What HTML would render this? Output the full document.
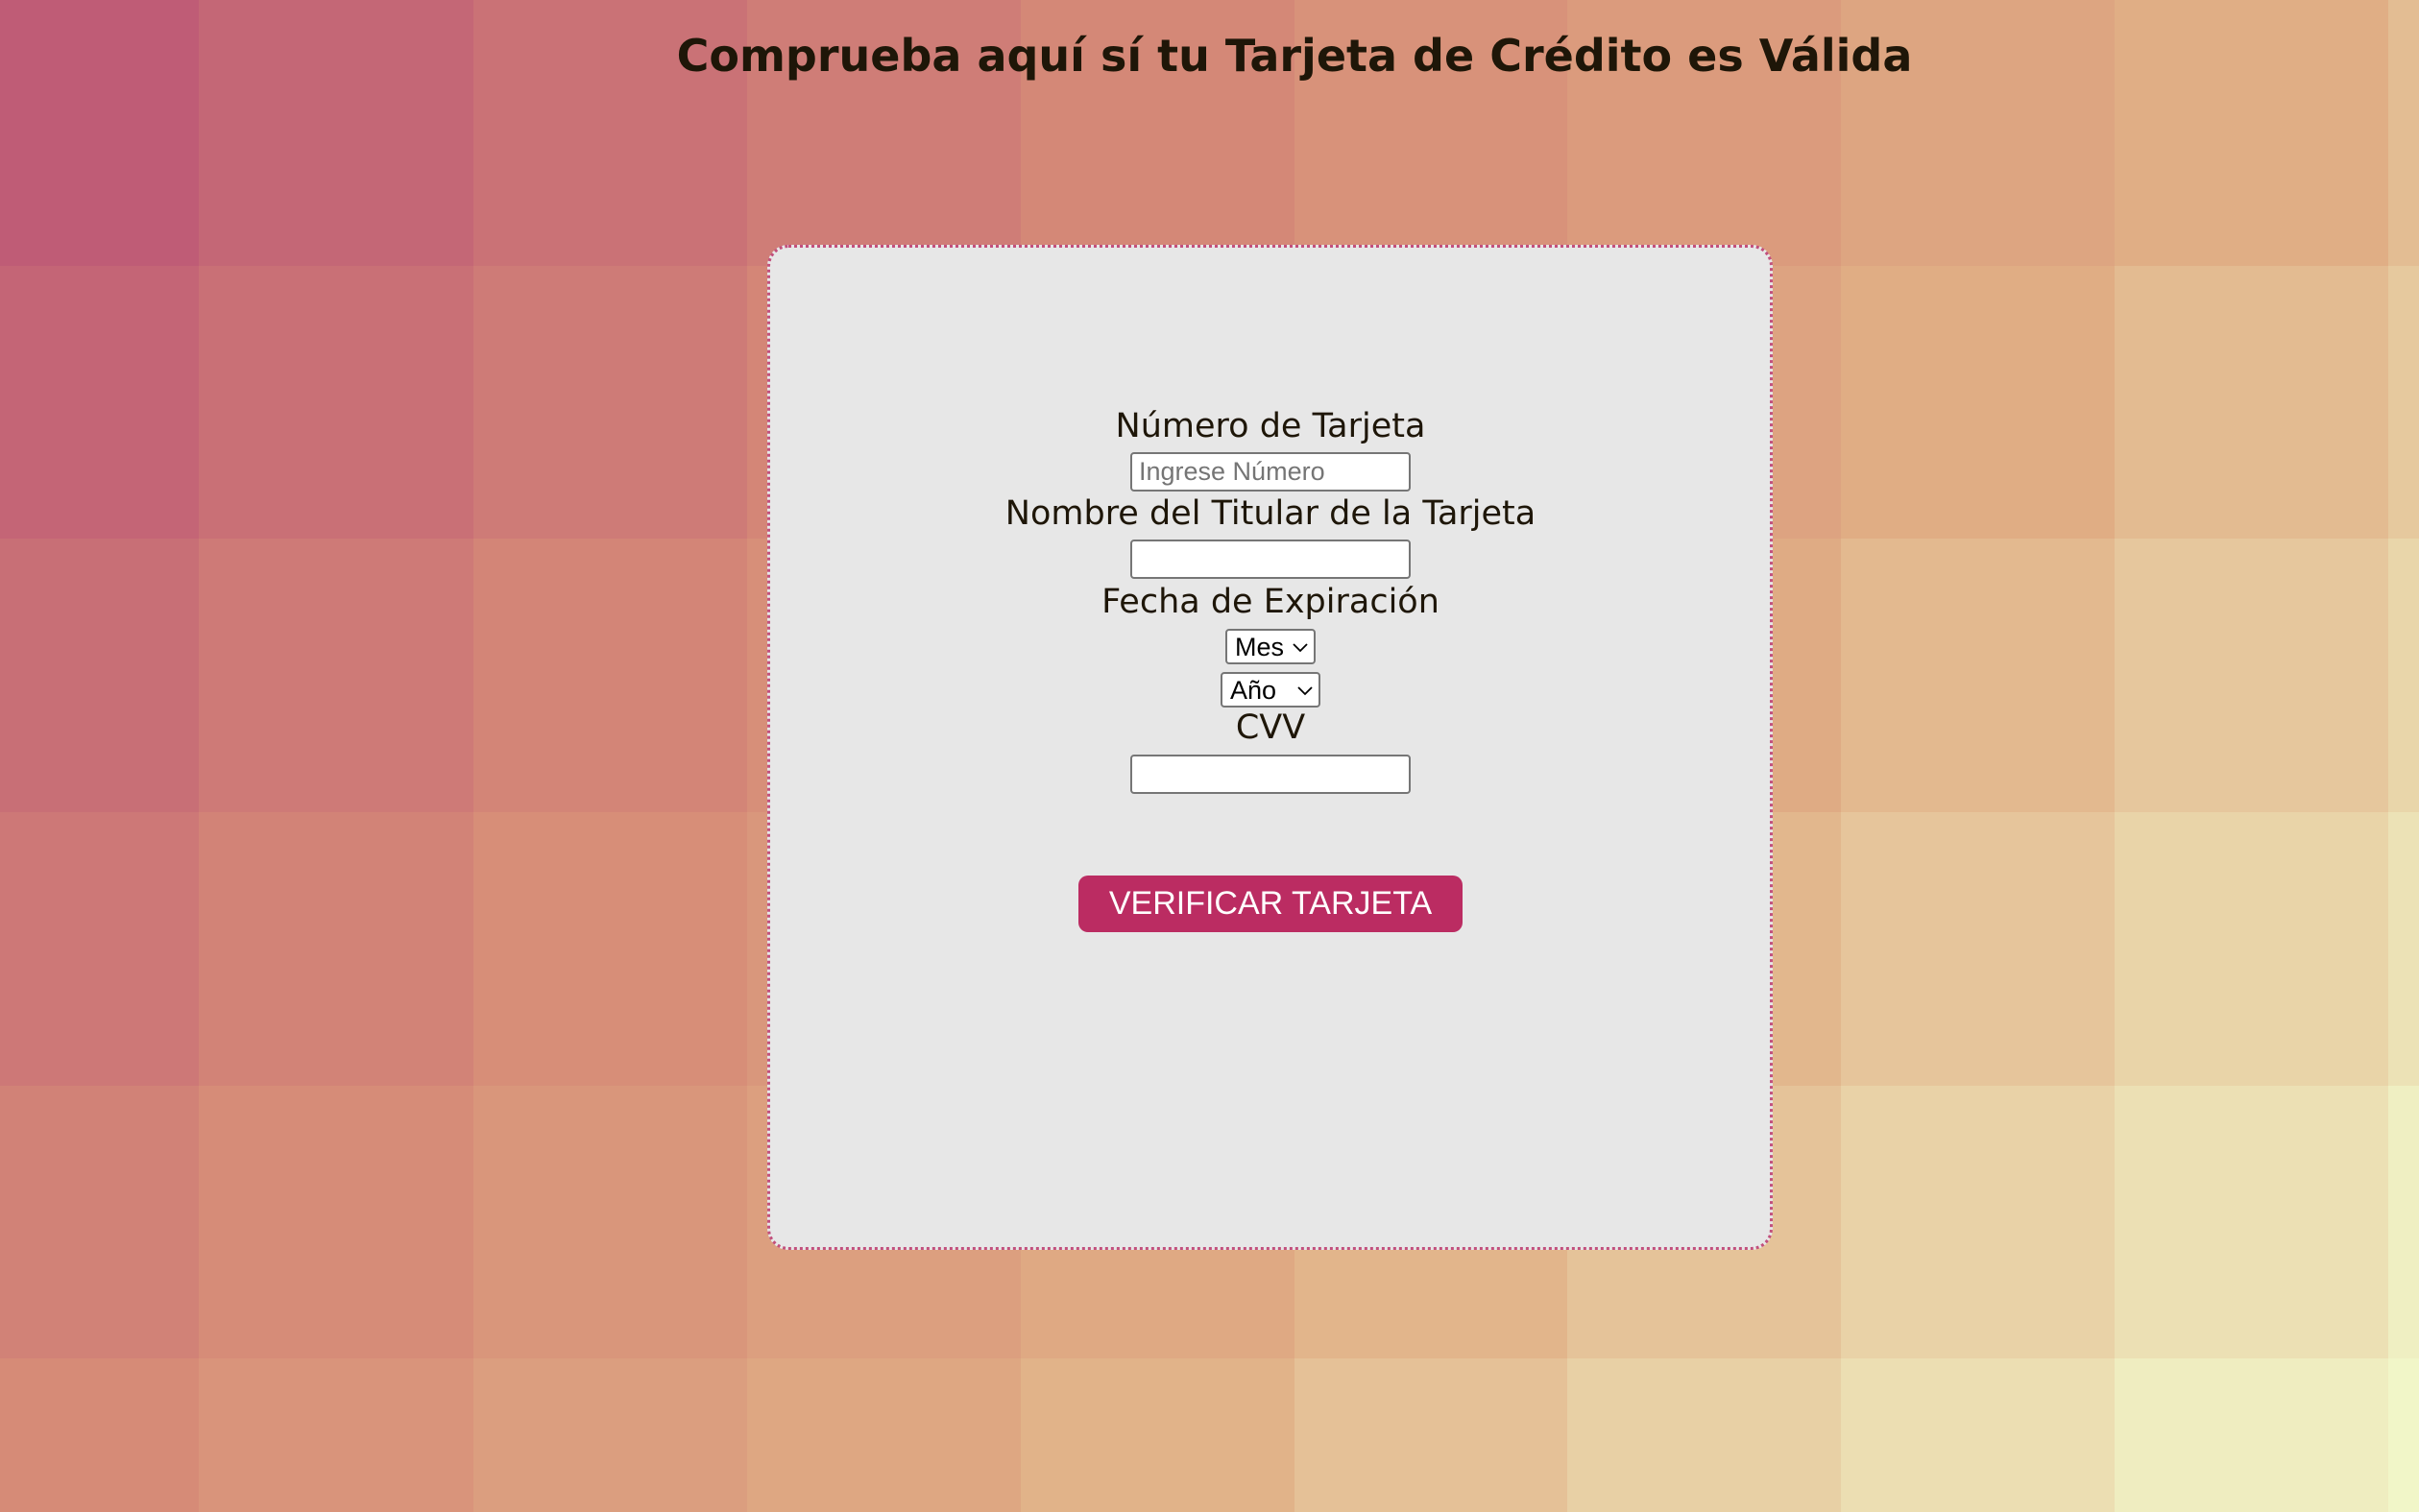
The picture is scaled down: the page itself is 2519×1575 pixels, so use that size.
<!DOCTYPE html>
<html><head><meta charset="utf-8">
<style>
html,body{margin:0;padding:0;}
body{width:2519px;height:1575px;overflow:hidden;position:relative;background:linear-gradient(135deg,#bf5c76,#d9907a 50%,#efedc0);font-family:"Liberation Sans",sans-serif;}
#bg{position:absolute;left:0;top:0;width:2519px;height:1575px;}
.t{position:absolute;}
h1{position:absolute;left:0;width:2696px;top:32px;margin:0;text-align:center;font-family:"DejaVu Sans",sans-serif;font-size:46px;font-weight:bold;color:#1e1608;line-height:1.164;}
.card{position:absolute;left:799px;top:255px;width:1041px;height:1041px;background:#e7e7e7;border:3px dotted #c2507d;border-radius:22px;}
.lbl{position:absolute;left:0;width:2646px;text-align:center;font-family:"DejaVu Sans",sans-serif;font-size:35px;color:#1e1608;line-height:1.164;}
.inp{position:absolute;left:1177px;width:288px;height:37px;background:#fff;border:2px solid #767676;border-radius:4px;}
.sel{position:absolute;background:#fff;border:2px solid #767676;border-radius:4px;font-size:27px;color:#000;box-sizing:border-box;}
.sel span{position:absolute;left:8px;top:1px;line-height:32px;}
.sel svg{position:absolute;top:13px;}
.btn{position:absolute;left:1123px;top:912px;width:400px;height:59px;background:#bb2c62;border-radius:10px;color:#fff;font-size:34px;display:flex;align-items:center;justify-content:center;}
</style></head><body>
<div id="bg"></div>
<script>
(function(){
var xs=[0,207,493,778,1063,1348,1632,1917,2202,2487,2519];
var ys=[0,277,561,846,1131,1415,1575];
var st=[[0,[191,92,118]],[0.35,[214,139,119]],[0.65,[224,174,133]],[1,[239,237,192]]];
function col(t){t=Math.max(0,Math.min(1.05,t));for(var s=0;s<st.length-1;s++){if(t<=st[s+1][0]||s==st.length-2){var a=st[s],b=st[s+1],f=(t-a[0])/(b[0]-a[0]);return a[1].map(function(x,k){return Math.max(0,Math.min(255,Math.round(x+(b[1][k]-x)*f)));});}}}
var bg=document.getElementById('bg'),h='';
for(var j=0;j<6;j++)for(var i=0;i<10;i++){
var u=i/8,v=j/5,c=col(0.65*u+0.35*v);
h+='<div class="t" style="left:'+xs[i]+'px;top:'+ys[j]+'px;width:'+(xs[i+1]-xs[i])+'px;height:'+(ys[j+1]-ys[j])+'px;background:rgb('+c.join(',')+')"></div>';
}
bg.innerHTML=h;
})();
</script>
<h1>Comprueba aquí sí tu Tarjeta de Crédito es Válida</h1>
<div class="card"></div>
<div class="lbl" style="top:424px">Número de Tarjeta</div>
<div class="inp" style="top:471px"><span style="position:absolute;left:7px;top:5px;font-size:27px;line-height:27px;color:#757575">Ingrese Número</span></div>
<div class="lbl" style="top:515px">Nombre del Titular de la Tarjeta</div>
<div class="inp" style="top:562px"></div>
<div class="lbl" style="top:607px">Fecha de Expiración</div>
<div class="sel" style="left:1276px;top:655px;width:94px;height:37px"><span>Mes</span><svg style="left:68px" width="16" height="10" viewBox="0 0 16 10"><path d="M1 1l7 7 7-7" fill="none" stroke="#000" stroke-width="1.8"/></svg></div>
<div class="sel" style="left:1271px;top:700px;width:104px;height:37px"><span>Año</span><svg style="left:78px" width="16" height="10" viewBox="0 0 16 10"><path d="M1 1l7 7 7-7" fill="none" stroke="#000" stroke-width="1.8"/></svg></div>
<div class="lbl" style="top:738px">CVV</div>
<div class="inp" style="top:786px"></div>
<div class="btn">VERIFICAR TARJETA</div>
</body></html>
